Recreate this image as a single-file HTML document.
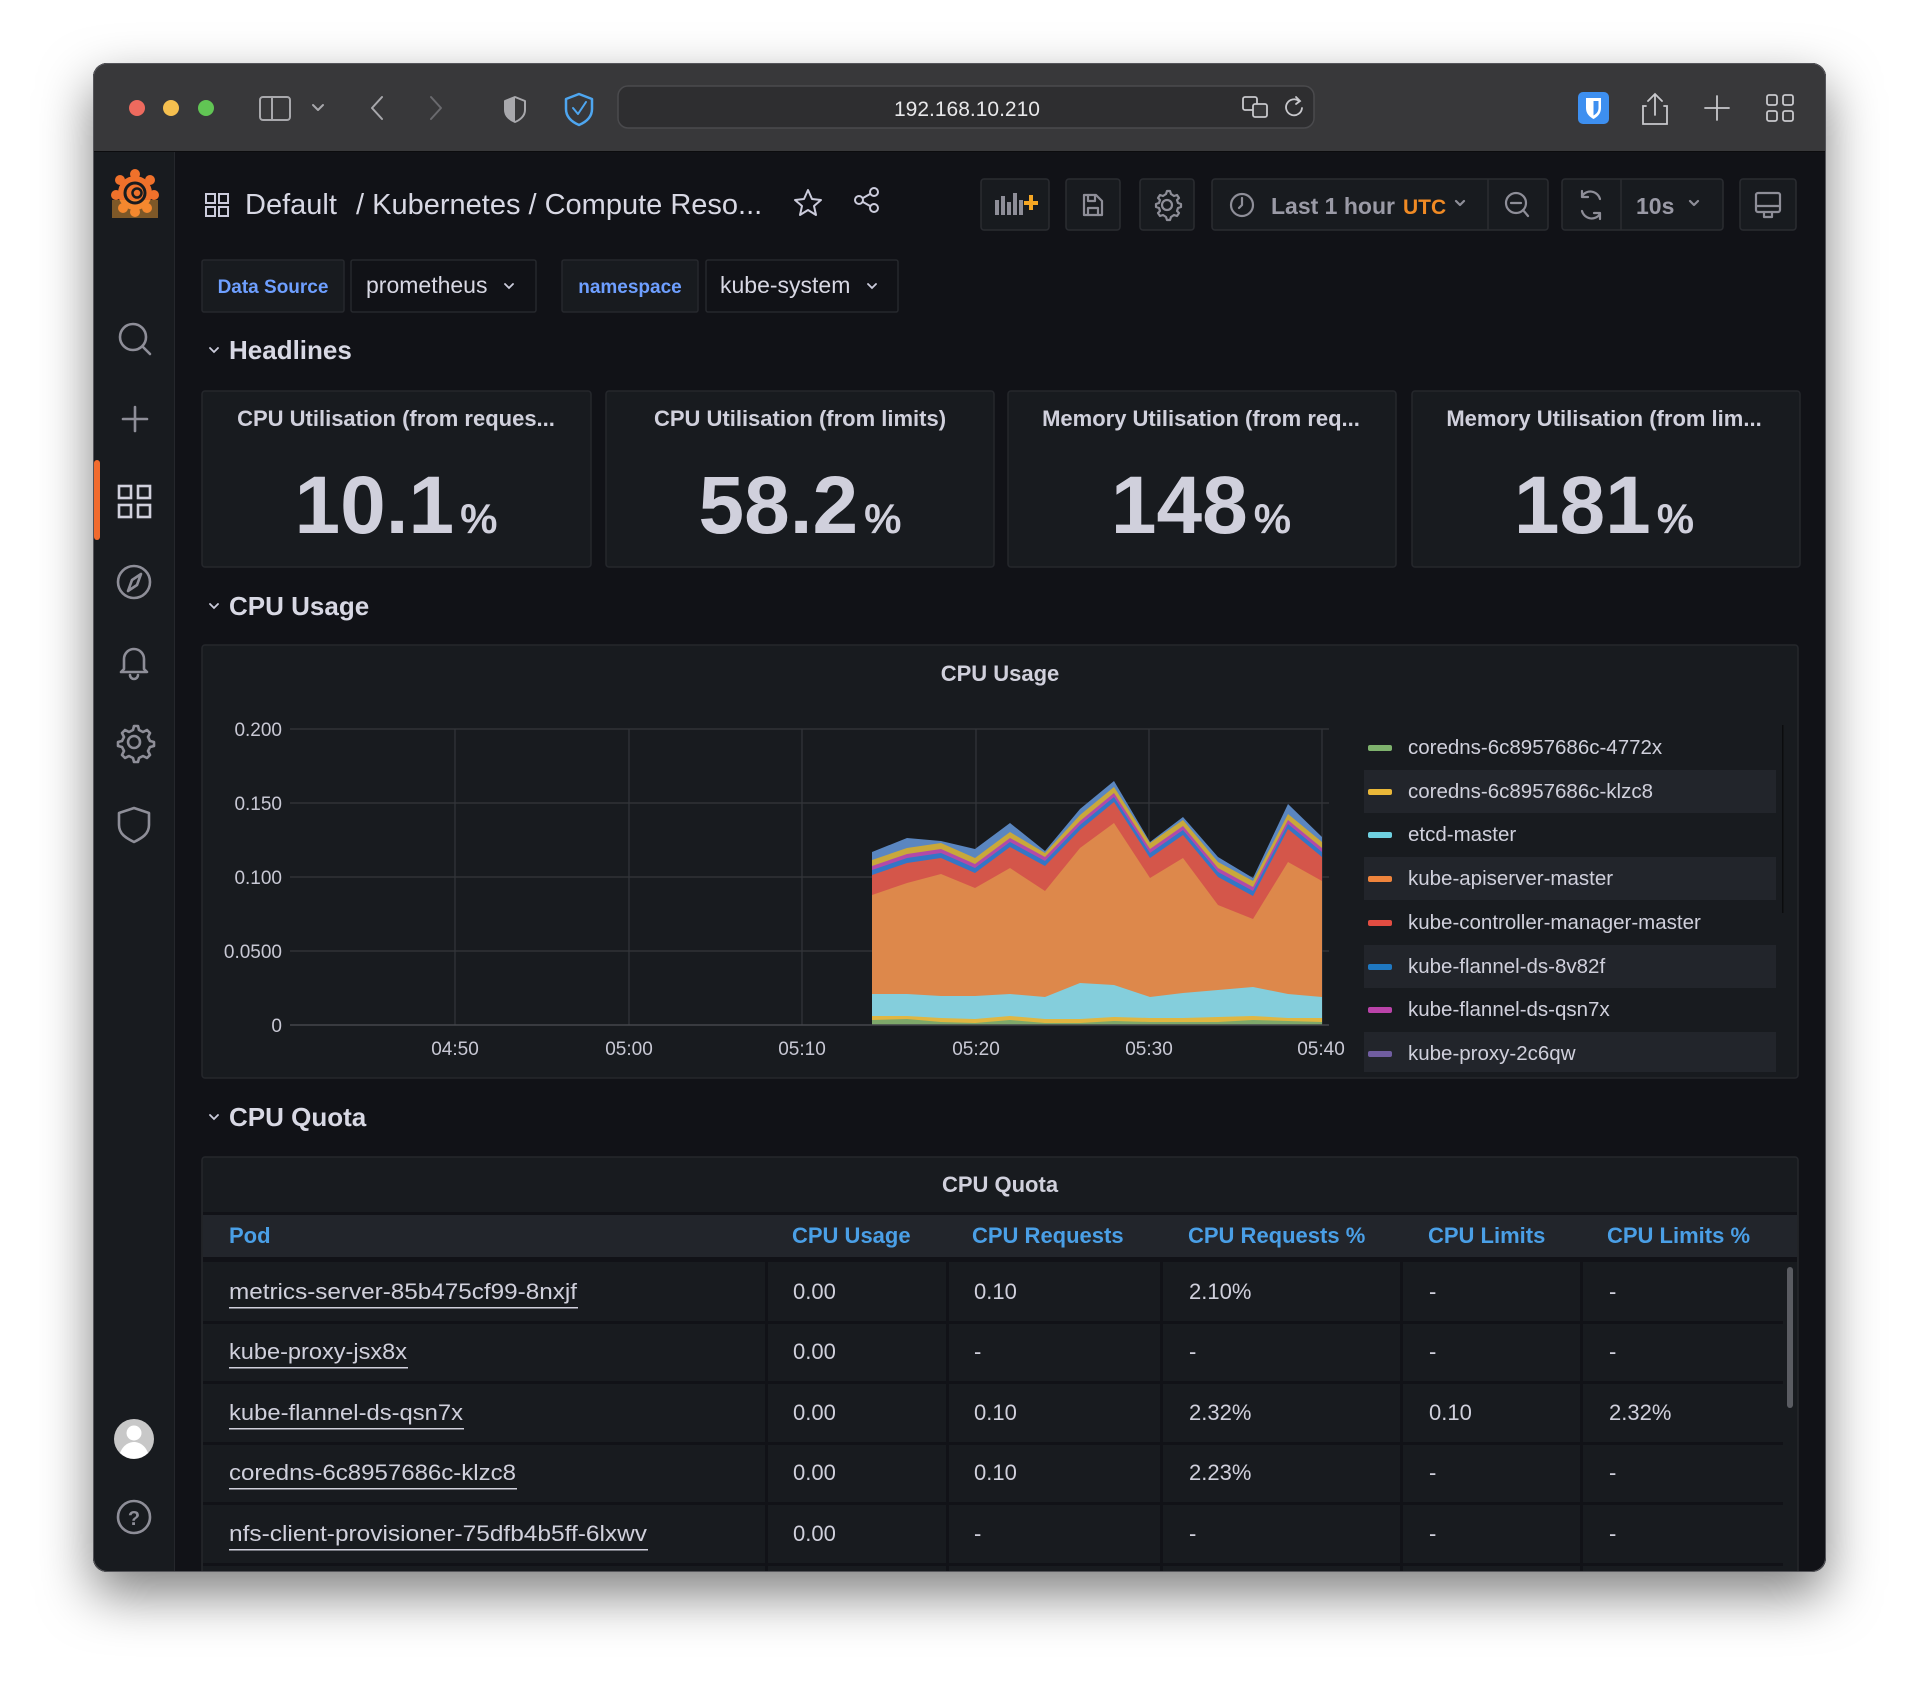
<!DOCTYPE html>
<html><head><meta charset="utf-8"><style>
html,body{margin:0;padding:0;background:#fff;width:1920px;height:1696px;overflow:hidden}
svg text{font-family:"Liberation Sans",sans-serif}
</style></head><body>
<svg width="1920" height="1696" viewBox="0 0 1920 1696" xmlns="http://www.w3.org/2000/svg">
<defs>
<filter id="sh" x="-10%" y="-10%" width="120%" height="125%"><feDropShadow dx="0" dy="22" stdDeviation="26" flood-color="#000" flood-opacity="0.5"/></filter>
<clipPath id="win"><rect x="93" y="63" width="1733" height="1509" rx="14"/></clipPath>
</defs>
<rect x="93" y="63" width="1733" height="1509" rx="14" fill="#111217" filter="url(#sh)"/>
<g clip-path="url(#win)">
<rect x="93" y="63" width="1733" height="1509" fill="#111217"/>
<rect x="93" y="63" width="1733" height="89" fill="#38383a"/>
<rect x="93" y="151" width="1733" height="1" fill="#0c0c0e"/>
<circle cx="137" cy="108" r="8" fill="#ed6a5e"/><circle cx="171" cy="108" r="8" fill="#f5bf4f"/><circle cx="206" cy="108" r="8" fill="#61c554"/>
<g fill="none" stroke="#a8a8ac" stroke-width="2" stroke-linecap="round" stroke-linejoin="round">
<rect x="260" y="97" width="30" height="23" rx="3"/><line x1="272" y1="97" x2="272" y2="120"/>
<polyline points="313,105 318,110 323,105"/>
<polyline points="382,97 372,108 382,119"/>
<polyline points="431,97 441,108 431,119" stroke="#6a6a6e"/>
<path d="M515 97 l10 4 v9 c0 6 -5 10 -10 12 c-5 -2 -10 -6 -10 -12 v-9 z"/>
<path d="M579 94 l13 5 v10 c0 8 -6 13 -13 16 c-7 -3 -13 -8 -13 -16 v-10 z" stroke="#4ea6f0" stroke-width="2.5"/>
<polyline points="573,108 578,114 586,102" stroke="#4ea6f0"/>
</g>
<path d="M515 97 l-10 4 v9 c0 6 5 10 10 12 z" fill="#a8a8ac"/>
<rect x="618" y="86" width="696" height="42" rx="10" fill="#2e2e30" stroke="#4a4a4d" stroke-width="1.5"/>
<text x="967" y="116" text-anchor="middle" font-size="21" fill="#e8e8ea">192.168.10.210</text>
<g fill="none" stroke="#c8c8cc" stroke-width="1.8" stroke-linecap="round">
<rect x="1243" y="97" width="14" height="13" rx="2"/><rect x="1253" y="104" width="14" height="13" rx="2" fill="#38383a"/>
<path d="M1299 101 a8 8 0 1 0 3 7"/><polyline points="1296,97 1300,101 1296,104"/>
<path d="M1655 95 v20 M1648 101 l7 -7 7 7 M1646 106 h-3 v18 h24 v-18 h-3"/>
<path d="M1717 96 v24 M1705 108 h24"/>
<rect x="1767" y="95" width="10" height="10" rx="2"/><rect x="1783" y="95" width="10" height="10" rx="2"/><rect x="1767" y="111" width="10" height="10" rx="2"/><rect x="1783" y="111" width="10" height="10" rx="2"/>
</g>
<rect x="1578" y="92" width="31" height="32" rx="5" fill="#3d8ff0"/>
<path d="M1586 98 h15 v10 c0 6 -4 9 -7.5 11 c-3.5 -2 -7.5 -5 -7.5 -11 z" fill="#fff"/>
<path d="M1593.5 101 h5 v7 c0 4 -2.5 6 -5 7.5 z" fill="#3d8ff0"/>

<rect x="93" y="152" width="82" height="1420" fill="#181b1f"/>
<rect x="174" y="152" width="1" height="1420" fill="#25272c"/>
<g fill="#f0712b"><circle cx="135" cy="193" r="17"/><circle cx="135" cy="174" r="5"/><circle cx="150" cy="180" r="5"/><circle cx="154" cy="195" r="5"/><circle cx="147" cy="208" r="5"/><circle cx="120" cy="180" r="5"/><circle cx="116" cy="195" r="5"/><circle cx="123" cy="208" r="5"/><circle cx="135" cy="212" r="5"/></g>
<rect x="112" y="200" width="46" height="18" fill="#f8a532" opacity="0.45"/>
<circle cx="135" cy="193" r="10" fill="none" stroke="#181b1f" stroke-width="3"/>
<circle cx="137" cy="193" r="4.5" fill="none" stroke="#181b1f" stroke-width="2.5"/>
<g fill="none" stroke="#8e8e98" stroke-width="2.6" stroke-linecap="round" stroke-linejoin="round">
<circle cx="133" cy="337" r="13"/><line x1="143" y1="347" x2="150" y2="354"/>
<path d="M135 407 v24 M123 419 h24"/>
<circle cx="134" cy="582" r="16"/><path d="M141 574 l-4 11 -9 6 4 -11 z"/>
<path d="M124 669 v-10 a10 10 0 0 1 20 0 v10 l3 3 h-26 z M130 675 a4 4 0 0 0 8 0"/>
<circle cx="134" cy="742" r="6"/><path d="M134 726 l4 0 1 4 4 2 4 -2 3 3 -2 4 2 4 4 1 v4 l-4 1 -2 4 2 4 -3 3 -4 -2 -4 2 -1 4 h-4 l-1 -4 -4 -2 -4 2 -3 -3 2 -4 -2 -4 -4 -1 v-4 l4 -1 2 -4 -2 -4 3 -3 4 2 4 -2 1 -4 z"/>
<path d="M134 808 l15 5 v12 c0 9 -7 13 -15 17 c-8 -4 -15 -8 -15 -17 v-12 z"/>
<circle cx="134" cy="1517" r="16"/>
</g>
<text x="134" y="1525" text-anchor="middle" font-size="20" font-weight="bold" fill="#8e8e98">?</text>
<g fill="none" stroke="#d0d0dc" stroke-width="2.6"><rect x="119" y="486" width="12" height="12"/><rect x="138" y="486" width="12" height="12"/><rect x="119" y="505" width="12" height="12"/><rect x="138" y="505" width="12" height="12"/></g>
<rect x="94" y="460" width="6" height="80" rx="3" fill="#f06b2e"/>
<circle cx="134" cy="1439" r="20" fill="#c8c8c8"/>
<circle cx="134" cy="1433" r="7.5" fill="#fff"/><path d="M120 1453 c3 -8 9 -11 14 -11 c5 0 11 3 14 11 a20 20 0 0 1 -28 0 z" fill="#fff"/>

<g fill="none" stroke="#ccccdc" stroke-width="2"><rect x="206" y="194" width="9" height="9"/><rect x="219" y="194" width="9" height="9"/><rect x="206" y="207" width="9" height="9"/><rect x="219" y="207" width="9" height="9"/></g>
<text x="245" y="214" font-size="29" fill="#d8d8e4">Default</text>
<text x="356" y="214" font-size="29" fill="#d8d8e4">/ Kubernetes / Compute Reso...</text>
<path d="M808 190 l4 9 9 1 -7 6 2 9 -8 -5 -8 5 2 -9 -7 -6 9 -1 z" fill="none" stroke="#ccccdc" stroke-width="2" stroke-linejoin="round"/>
<g fill="none" stroke="#ccccdc" stroke-width="2"><circle cx="874" cy="192" r="4"/><circle cx="859" cy="200" r="4"/><circle cx="874" cy="208" r="4"/><path d="M863 198 l7 -4 M863 202 l7 4"/></g>

<g fill="#181b1f" stroke="#2a2c31" stroke-width="1.5">
<rect x="981" y="179" width="68" height="51" rx="3"/><rect x="1066" y="179" width="54" height="51" rx="3"/><rect x="1140" y="179" width="54" height="51" rx="3"/>
<rect x="1212" y="179" width="336" height="51" rx="3"/><rect x="1562" y="179" width="161" height="51" rx="3"/><rect x="1740" y="179" width="56" height="51" rx="3"/>
</g>
<path d="M1488 179 v51 M1621 179 v51" stroke="#2a2c31" stroke-width="1.5"/>
<g fill="#8e8e98"><rect x="995" y="200" width="4" height="15"/><rect x="1001" y="196" width="4" height="19"/><rect x="1007" y="202" width="4" height="13"/><rect x="1013" y="193" width="4" height="22"/><rect x="1019" y="200" width="4" height="15"/></g>
<path d="M1031 195 v15 M1024 203 h14" stroke="#f5a623" stroke-width="4"/>
<g fill="none" stroke="#8e8e98" stroke-width="2.2" stroke-linecap="round" stroke-linejoin="round">
<path d="M1084 195 h12 l6 6 v14 h-18 z M1088 195 v6 h7 v-6 M1088 215 v-7 h10 v7"/>
<circle cx="1167" cy="205" r="5"/><path d="M1167 191 l3 0 1 3 3 2 3 -1 2 3 -2 2 1 3 3 1 v3 l-3 1 -1 3 2 2 -2 3 -3 -1 -3 2 -1 3 h-3 l-1 -3 -3 -2 -3 1 -2 -3 2 -2 -1 -3 -3 -1 v-3 l3 -1 1 -3 -2 -2 2 -3 3 1 3 -2 1 -3 z"/>
<circle cx="1242" cy="205" r="11"/><path d="M1242 198 v7 l-3 3"/>
<circle cx="1516" cy="203" r="10"/><path d="M1511 203 h10 M1523 210 l5 6"/>
<path d="M1582 196 a10 10 0 0 1 18 3 M1600 214 a10 10 0 0 1 -18 -3 M1582 191 v6 h6 M1600 219 v-6 h-6"/>
<path d="M1690 201 l4 4 4 -4 M1456 201 l4 4 4 -4"/>
<rect x="1756" y="193" width="24" height="19" rx="2"/><path d="M1756 206 h24 M1764 212 v5 h8 v-5"/>
</g>
<text x="1271" y="214" font-size="23" font-weight="bold" fill="#9a9aa6">Last 1 hour</text>
<text x="1403" y="214" font-size="21" font-weight="bold" fill="#f08a24">UTC</text>
<text x="1636" y="214" font-size="23" font-weight="bold" fill="#9a9aa6">10s</text>

<g stroke="#26282d" stroke-width="1.5"><rect x="202" y="260" width="142" height="52" rx="2" fill="#181b1f"/><rect x="351" y="260" width="185" height="52" rx="2" fill="#111217"/><rect x="562" y="260" width="136" height="52" rx="2" fill="#181b1f"/><rect x="706" y="260" width="192" height="52" rx="2" fill="#111217"/></g>
<text x="273" y="293" text-anchor="middle" font-size="19" font-weight="bold" fill="#6e9fff">Data Source</text>
<text x="366" y="293" font-size="23" fill="#d8d8e4">prometheus</text>
<text x="630" y="293" text-anchor="middle" font-size="19" font-weight="bold" fill="#6e9fff">namespace</text>
<text x="720" y="293" font-size="23" fill="#d8d8e4">kube-system</text>
<g fill="none" stroke="#ccccdc" stroke-width="1.8" stroke-linecap="round"><path d="M505 284 l4 4 4 -4 M868 284 l4 4 4 -4"/>
<path d="M210 348 l4 4 4 -4 M210 604 l4 4 4 -4 M210 1115 l4 4 4 -4"/></g>
<text x="229" y="359" font-size="26" font-weight="bold" fill="#d8d8e4">Headlines</text>
<text x="229" y="615" font-size="26" font-weight="bold" fill="#d8d8e4">CPU Usage</text>
<text x="229" y="1126" font-size="26" font-weight="bold" fill="#d8d8e4">CPU Quota</text>

<g fill="#181b1f" stroke="#25272c" stroke-width="1.5">
<rect x="202" y="391" width="389" height="176" rx="3"/><rect x="606" y="391" width="388" height="176" rx="3"/><rect x="1008" y="391" width="388" height="176" rx="3"/><rect x="1412" y="391" width="388" height="176" rx="3"/>
</g>
<g font-size="22" font-weight="bold" fill="#d0d0dc" text-anchor="middle">
<text x="396" y="426">CPU Utilisation (from reques...</text>
<text x="800" y="426">CPU Utilisation (from limits)</text>
<text x="1201" y="426">Memory Utilisation (from req...</text>
<text x="1604" y="426">Memory Utilisation (from lim...</text>
</g>
<g font-size="82" font-weight="bold" fill="#d0d0dc" text-anchor="middle">
<text x="396" y="533">10.1<tspan dx="6" font-size="42">%</tspan></text>
<text x="800" y="533">58.2<tspan dx="6" font-size="42">%</tspan></text>
<text x="1201" y="533">148<tspan dx="6" font-size="42">%</tspan></text>
<text x="1604" y="533">181<tspan dx="6" font-size="42">%</tspan></text>
</g>

<rect x="202" y="645" width="1596" height="433" rx="3" fill="#181b1f" stroke="#25272c" stroke-width="1.5"/>
<text x="1000" y="681" text-anchor="middle" font-size="22" font-weight="bold" fill="#d0d0dc">CPU Usage</text>
<g stroke="#34363b" stroke-width="1.2">
<path d="M290 729 H1329 M290 803 H1329 M290 877 H1329 M290 951 H1329"/>
<path d="M455 729 V1025 M629 729 V1025 M802 729 V1025 M976 729 V1025 M1149 729 V1025 M1322 729 V1025"/>
</g>
<polygon fill="#5a86c0" points="872,852 907,838 941,841 975,849 1010,823 1045,851 1080,809 1114,781 1150,842 1183,817 1218,857 1253,878 1288,804 1322,837 1322,1025 872,1025"/>
<polygon fill="#c9a83a" points="872,860 907,848 941,843 975,858 1010,832 1045,853 1080,815 1114,787 1150,843 1183,820 1218,862 1253,881 1288,814 1322,842 1322,1025 872,1025"/>
<polygon fill="#b24aa8" points="872,866 907,854 941,849 975,864 1010,838 1045,857 1080,821 1114,793 1150,849 1183,826 1218,868 1253,887 1288,820 1322,848 1322,1025 872,1025"/>
<polygon fill="#3476c6" points="872,870 907,858 941,853 975,868 1010,842 1045,861 1080,825 1114,797 1150,853 1183,830 1218,872 1253,891 1288,824 1322,852 1322,1025 872,1025"/>
<polygon fill="#d4564a" points="872,875 907,863 941,858 975,873 1010,847 1045,866 1080,830 1114,802 1150,858 1183,835 1218,877 1253,896 1288,829 1322,857 1322,1025 872,1025"/>
<polygon fill="#dd884b" points="872,895 907,883 941,874 975,888 1010,868 1045,891 1080,848 1114,823 1150,878 1183,858 1218,905 1253,919 1288,862 1322,881 1322,1025 872,1025"/>
<polygon fill="#84cedc" points="872,994 907,994 941,996 975,996 1010,994 1045,997 1080,983 1114,985 1150,997 1183,993 1218,990 1253,987 1288,994 1322,997 1322,1025 872,1025"/>
<polygon fill="#e0b642" points="872,1016 907,1016 941,1018 975,1019 1010,1016 1045,1019 1080,1019 1114,1017 1150,1018 1183,1018 1218,1017 1253,1016 1288,1018 1322,1018 1322,1025 872,1025"/>
<polygon fill="#7ea86a" points="872,1020 907,1019 941,1022 975,1023 1010,1020 1045,1023 1080,1023 1114,1021 1150,1022 1183,1022 1218,1022 1253,1020 1288,1021 1322,1022 1322,1025 872,1025"/>
<path d="M290 1025 H1329" stroke="#44464b" stroke-width="1.5"/>
<g font-size="19" fill="#c8c8d4" text-anchor="end">
<text x="282" y="736">0.200</text><text x="282" y="810">0.150</text><text x="282" y="884">0.100</text><text x="282" y="958">0.0500</text><text x="282" y="1032">0</text>
</g>
<g font-size="19" fill="#c8c8d4" text-anchor="middle">
<text x="455" y="1055">04:50</text><text x="629" y="1055">05:00</text><text x="802" y="1055">05:10</text><text x="976" y="1055">05:20</text><text x="1149" y="1055">05:30</text><text x="1321" y="1055">05:40</text>
</g>
<g fill="#22252b"><rect x="1364" y="770" width="412" height="43"/><rect x="1364" y="857" width="412" height="43"/><rect x="1364" y="945" width="412" height="43"/><rect x="1364" y="1032" width="412" height="40"/></g>
<rect x="1782" y="725" width="1.5" height="188" fill="#0b0c0e"/>
<g>
<rect x="1368" y="745" width="24" height="6" rx="2" fill="#7eb26d"/>
<rect x="1368" y="789" width="24" height="6" rx="2" fill="#eab839"/>
<rect x="1368" y="832" width="24" height="6" rx="2" fill="#6ed0e0"/>
<rect x="1368" y="876" width="24" height="6" rx="2" fill="#ef843c"/>
<rect x="1368" y="920" width="24" height="6" rx="2" fill="#e24d42"/>
<rect x="1368" y="964" width="24" height="6" rx="2" fill="#1f78c1"/>
<rect x="1368" y="1007" width="24" height="6" rx="2" fill="#ba43a9"/>
<rect x="1368" y="1051" width="24" height="6" rx="2" fill="#705da0"/>
</g>
<g font-size="20.5" fill="#d0d0dc">
<text x="1408" y="754">coredns-6c8957686c-4772x</text>
<text x="1408" y="798">coredns-6c8957686c-klzc8</text>
<text x="1408" y="841">etcd-master</text>
<text x="1408" y="885">kube-apiserver-master</text>
<text x="1408" y="929">kube-controller-manager-master</text>
<text x="1408" y="973">kube-flannel-ds-8v82f</text>
<text x="1408" y="1016">kube-flannel-ds-qsn7x</text>
<text x="1408" y="1060">kube-proxy-2c6qw</text>
</g>

<rect x="202" y="1157" width="1596" height="440" rx="3" fill="#181b1f" stroke="#25272c" stroke-width="1.5"/>
<text x="1000" y="1192" text-anchor="middle" font-size="22" font-weight="bold" fill="#d0d0dc">CPU Quota</text>
<rect x="203" y="1212" width="1594" height="3" fill="#111217"/>
<rect x="203" y="1215" width="1594" height="42" fill="#22252b"/>
<rect x="203" y="1257" width="1594" height="5" fill="#111217"/>
<g font-size="22" font-weight="bold" fill="#4a9fe6">
<text x="229" y="1243">Pod</text><text x="792" y="1243">CPU Usage</text><text x="972" y="1243">CPU Requests</text><text x="1188" y="1243">CPU Requests %</text><text x="1428" y="1243">CPU Limits</text><text x="1607" y="1243">CPU Limits %</text>
</g>
<g fill="#111217">
<rect x="203" y="1321" width="1580" height="3"/><rect x="203" y="1381" width="1580" height="3"/><rect x="203" y="1442" width="1580" height="3"/><rect x="203" y="1502" width="1580" height="3"/><rect x="203" y="1563" width="1580" height="3"/>
<rect x="765" y="1262" width="3" height="320"/><rect x="946" y="1262" width="3" height="320"/><rect x="1160" y="1262" width="3" height="320"/><rect x="1400" y="1262" width="3" height="320"/><rect x="1580" y="1262" width="3" height="320"/>
</g>
<rect x="1787" y="1267" width="6" height="141" rx="3" fill="#5a5c62"/>
<g font-size="22" fill="#d0d0dc">
<text x="229" y="1299" textLength="348" lengthAdjust="spacingAndGlyphs">metrics-server-85b475cf99-8nxjf</text><rect x="229" y="1307" width="349" height="1.5"/>
<text x="229" y="1359" textLength="178" lengthAdjust="spacingAndGlyphs">kube-proxy-jsx8x</text><rect x="229" y="1367" width="179" height="1.5"/>
<text x="229" y="1420" textLength="234" lengthAdjust="spacingAndGlyphs">kube-flannel-ds-qsn7x</text><rect x="229" y="1428" width="235" height="1.5"/>
<text x="229" y="1480" textLength="287" lengthAdjust="spacingAndGlyphs">coredns-6c8957686c-klzc8</text><rect x="229" y="1488" width="288" height="1.5"/>
<text x="229" y="1541" textLength="418" lengthAdjust="spacingAndGlyphs">nfs-client-provisioner-75dfb4b5ff-6lxwv</text><rect x="229" y="1549" width="419" height="1.5"/>
<text x="793" y="1299">0.00</text><text x="974" y="1299">0.10</text><text x="1189" y="1299">2.10%</text><text x="1429" y="1299">-</text><text x="1609" y="1299">-</text>
<text x="793" y="1359">0.00</text><text x="974" y="1359">-</text><text x="1189" y="1359">-</text><text x="1429" y="1359">-</text><text x="1609" y="1359">-</text>
<text x="793" y="1420">0.00</text><text x="974" y="1420">0.10</text><text x="1189" y="1420">2.32%</text><text x="1429" y="1420">0.10</text><text x="1609" y="1420">2.32%</text>
<text x="793" y="1480">0.00</text><text x="974" y="1480">0.10</text><text x="1189" y="1480">2.23%</text><text x="1429" y="1480">-</text><text x="1609" y="1480">-</text>
<text x="793" y="1541">0.00</text><text x="974" y="1541">-</text><text x="1189" y="1541">-</text><text x="1429" y="1541">-</text><text x="1609" y="1541">-</text>
</g>
</g>
<rect x="93.5" y="63.5" width="1732" height="1508" rx="14" fill="none" stroke="#55555a" stroke-width="1"/>
</svg>
</body></html>
